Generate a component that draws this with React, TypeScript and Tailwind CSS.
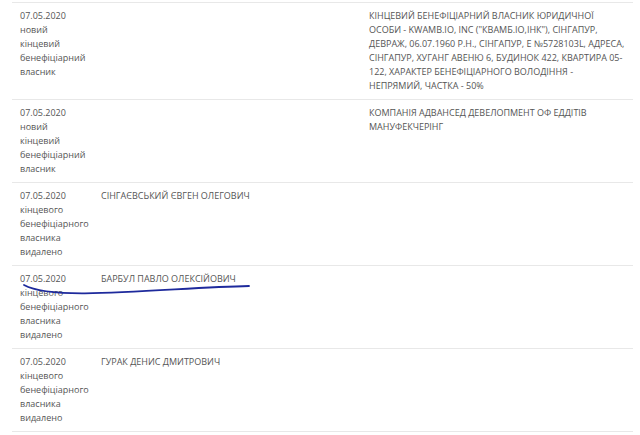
const rows = [
  {
    date: '07.05.2020',
    status: ['новий', 'кінцевий', 'бенефіціарний', 'власник'],
    name: '',
    info: [
      'КІНЦЕВИЙ БЕНЕФІЦІАРНИЙ ВЛАСНИК ЮРИДИЧНОЇ',
      'ОСОБИ - KWAMB.IO, INC ("КВАМБ.IO,ІНК"), СІНГАПУР,',
      'ДЕВРАЖ, 06.07.1960 Р.Н., СІНГАПУР, Е №5728103L, АДРЕСА,',
      'СІНГАПУР, ХУГАНГ АВЕНЮ 6, БУДИНОК 422, КВАРТИРА 05-',
      '122, ХАРАКТЕР БЕНЕФІЦІАРНОГО ВОЛОДІННЯ -',
      'НЕПРЯМИЙ, ЧАСТКА - 50%',
    ],
  },
  {
    date: '07.05.2020',
    status: ['новий', 'кінцевий', 'бенефіціарний', 'власник'],
    name: '',
    info: ['КОМПАНІЯ АДВАНСЕД ДЕВЕЛОПМЕНТ ОФ ЕДДІТІВ', 'МАНУФЕКЧЕРІНГ'],
  },
  {
    date: '07.05.2020',
    status: ['кінцевого', 'бенефіціарного', 'власника', 'видалено'],
    name: 'СІНГАЄВСЬКИЙ ЄВГЕН ОЛЕГОВИЧ',
    info: [],
  },
  {
    date: '07.05.2020',
    status: ['кінцевого', 'бенефіціарного', 'власника', 'видалено'],
    name: 'БАРБУЛ ПАВЛО ОЛЕКСІЙОВИЧ',
    info: [],
    marked: true,
  },
  {
    date: '07.05.2020',
    status: ['кінцевого', 'бенефіціарного', 'власника', 'видалено'],
    name: 'ГУРАК ДЕНИС ДМИТРОВИЧ',
    info: [],
  },
];

export default function App() {
  return (
    <div className="w-[640px] h-[435px] bg-white pt-[2px] px-3 overflow-hidden font-['Open_Sans',sans-serif] text-[9px] leading-[14px] text-[#555]">
      <div className="w-[621px] border-b border-[#e8e8e8]">
        {rows.map((r, i) => (
          <div key={i} className="relative grid grid-cols-[81px_268px_1fr] pl-2 py-[6px] border-t border-[#e8e8e8]">
            <div>
              <div>{r.date}</div>
              {r.status.map((s) => (
                <div key={s}>{s}</div>
              ))}
            </div>
            <div className="whitespace-nowrap">{r.name}</div>
            <div className="whitespace-nowrap">
              {r.info.map((l) => (
                <div key={l}>{l}</div>
              ))}
            </div>
            {/* hand-drawn underline */}
            {r.marked && (
              <svg className="absolute left-0 top-0 pointer-events-none" width="260" height="40" viewBox="0 0 260 40">
                <path
                  d="M12 19 C 23 25, 43 27.5, 73 27.3 C 128 26.5, 188 21, 237 20"
                  fill="none"
                  stroke="#1e2a9c"
                  strokeWidth="1.8"
                  strokeLinecap="round"
                />
              </svg>
            )}
          </div>
        ))}
      </div>
    </div>
  );
}
